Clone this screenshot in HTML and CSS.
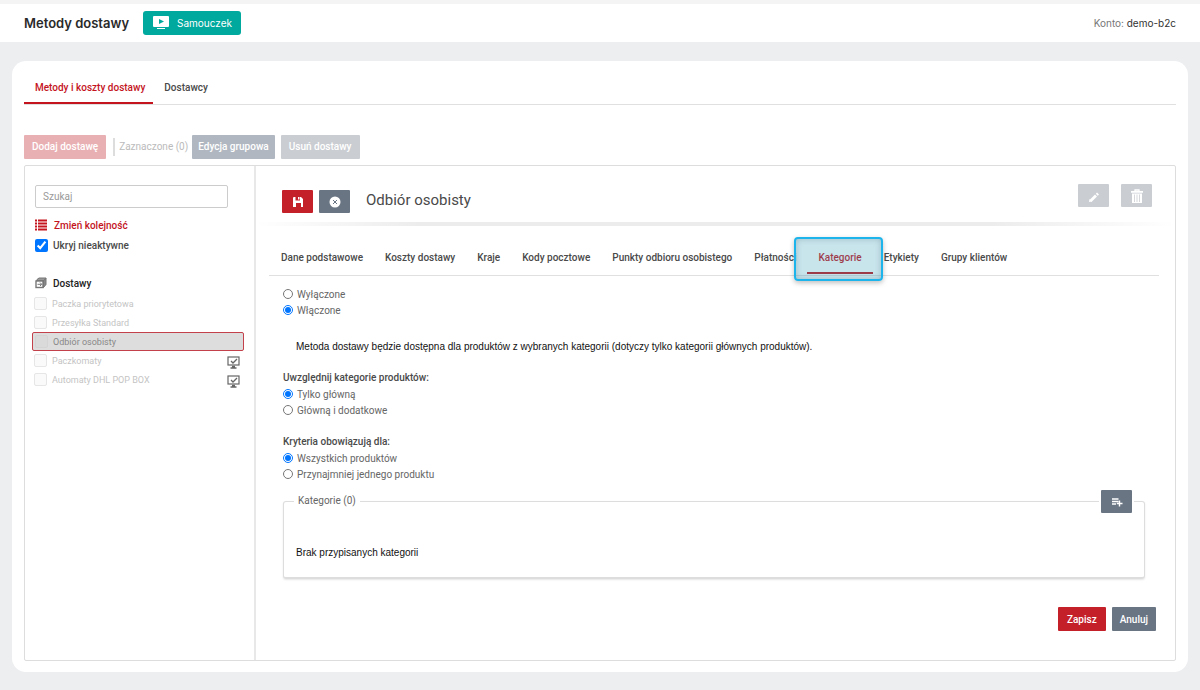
FILE: index.html
```html
<!DOCTYPE html>
<html lang="pl">
<head>
<meta charset="utf-8">
<title>Metody dostawy</title>
<link rel="stylesheet" href="styles.css">
</head>
<body>
<header class="topbar">
  <h1 class="page-title">Metody dostawy</h1>
  <button class="tutorial" type="button">
    <svg width="16" height="14" viewBox="0 0 16 14"><rect width="16" height="11" rx="1" fill="#fff"/><path d="M6 3v5l5-2.500z" fill="#00a99d"/><path d="M4 12.500h8" stroke="#fff"/></svg>
    Samouczek
  </button>
  <div class="account">Konto: <span class="account-name">demo-b2c</span></div>
</header>
<main class="card">
  <nav class="main-tabs">
    <a class="main-tab main-tab-active" href="#">Metody i koszty dostawy</a>
    <a class="main-tab" href="#">Dostawcy</a>
  </nav>
  <div class="toolbar">
    <button class="btn btn-add" type="button">Dodaj dostawę</button>
    <span class="selected-count">Zaznaczone (0)</span>
    <button class="btn btn-group" type="button">Edycja grupowa</button>
    <button class="btn btn-muted" type="button">Usuń dostawy</button>
  </div>
  <div class="frame">
    <aside class="sidebar">
      <input class="search" type="text" placeholder="Szukaj" aria-label="Szukaj">
      <a class="reorder" href="#">
        <svg width="12" height="12" viewBox="0 0 12 12"><path d="M0 1.500h2M3 1.500h9M0 4.500h2M3 4.500h9M0 7.500h2M3 7.500h9M0 10.500h2M3 10.500h9" stroke="#c4141d" stroke-width="2"/></svg>
        Zmień kolejność
      </a>
      <label class="hide-inactive"><input class="check" type="checkbox" checked>Ukryj nieaktywne</label>
      <div class="group-title">
        <svg width="12" height="12" viewBox="0 0 12 12" fill="none" stroke="#777"><path d="M2 2.500L4 1h7L9 3.500H1.500z" fill="#999"/><path d="M11 1v6.500L8.500 10.500V4z" fill="#888"/><rect x="1" y="4" width="7" height="6.500" fill="#fff" stroke-width="1.400"/><path d="M2.500 7.300h4M5 5.500l1.800 1.800L5 9"/></svg>
        Dostawy
      </div>
      <ul class="methods">
        <li class="method"><label class="method-label"><input class="box" type="checkbox">Paczka priorytetowa</label></li>
        <li class="method"><label class="method-label"><input class="box" type="checkbox">Przesyłka Standard</label></li>
        <li class="method method-active"><label class="method-label"><input class="box" type="checkbox">Odbiór osobisty</label></li>
        <li class="method"><label class="method-label"><input class="box" type="checkbox">Paczkomaty</label>
          <svg class="monitor" width="13" height="13" viewBox="0 0 13 13" fill="none" stroke="#666"><rect x="1" y="1" width="11" height="8" stroke-width="1.200"/><path d="M4 5l2 2 4-4" stroke-width="1.300"/><path d="M5 10.500h3M3.500 12h6" stroke-width="1.500"/></svg></li>
        <li class="method"><label class="method-label"><input class="box" type="checkbox">Automaty DHL POP BOX</label>
          <svg class="monitor" width="13" height="13" viewBox="0 0 13 13" fill="none" stroke="#666"><rect x="1" y="1" width="11" height="8" stroke-width="1.200"/><path d="M4 5l2 2 4-4" stroke-width="1.300"/><path d="M5 10.500h3M3.500 12h6" stroke-width="1.500"/></svg></li>
      </ul>
    </aside>
    <section class="detail">
      <div class="detail-head">
        <button class="icon-btn icon-btn-red" type="button" aria-label="Zapisz zmiany"><svg width="10" height="10" viewBox="0 0 10 10"><path fill="#fff" fill-rule="evenodd" d="M1 0h1.500v3.500h4.500V0h1l2 2v8H8V6H3v4H0V1a1 1 0 0 1 1-1zM5 0h1.500v2.500H5z"/></svg></button>
        <button class="icon-btn icon-btn-slate" type="button" aria-label="Zamknij"><svg width="12" height="12" viewBox="0 0 12 12"><circle cx="6" cy="6" r="5.500" fill="#fff"/><path d="M4 4l4 4M8 4l-4 4" stroke="#6a7583"/></svg></button>
        <h2 class="detail-title">Odbiór osobisty</h2>
        <div class="detail-actions">
          <button class="icon-btn icon-btn-light" type="button" aria-label="Edytuj"><svg width="12" height="12" viewBox="0 0 12 12"><path d="M2.500 11L8 5.500M8.800 4.700L10 3.500" stroke="#fff" stroke-width="2.800"/><path d="M1 12l.5-3 2.500 2.500z" fill="#fff"/></svg></button>
          <button class="icon-btn icon-btn-light" type="button" aria-label="Usuń"><svg width="12" height="14" viewBox="0 0 12 14"><path d="M4 2.500V1h4v1.500" fill="none" stroke="#fff" stroke-width="1.300"/><path d="M0 2h12v1.800H0zM1 4.500h10V14H1z" fill="#fff"/><path d="M3.500 5.500V13M6 5.500V13M8.500 5.500V13" stroke="#cacdd2" stroke-width=".8"/></svg></button>
        </div>
      </div>
      <nav class="tabs">
        <a class="tab" href="#">Dane podstawowe</a>
        <a class="tab" href="#">Koszty dostawy</a>
        <a class="tab" href="#">Kraje</a>
        <a class="tab" href="#">Kody pocztowe</a>
        <a class="tab" href="#">Punkty odbioru osobistego</a>
        <a class="tab" href="#">Płatności</a>
        <a class="tab tab-active" href="#">Kategorie<span class="highlight"></span></a>
        <a class="tab" href="#">Etykiety</a>
        <a class="tab" href="#">Grupy klientów</a>
      </nav>
      <form class="form">
        <div class="options" role="radiogroup" aria-label="Kategorie">
          <label class="option"><input class="radio" type="radio" name="state">Wyłączone</label>
          <label class="option"><input class="radio" type="radio" name="state" checked>Włączone</label>
        </div>
        <p class="note">Metoda dostawy będzie dostępna dla produktów z wybranych kategorii (dotyczy tylko kategorii głównych produktów).</p>
        <h3 class="question" id="q-scope">Uwzględnij kategorie produktów:</h3>
        <div class="options" role="radiogroup" aria-labelledby="q-scope">
          <label class="option"><input class="radio" type="radio" name="scope" checked>Tylko główną</label>
          <label class="option"><input class="radio" type="radio" name="scope">Główną i dodatkowe</label>
        </div>
        <h3 class="question" id="q-rule">Kryteria obowiązują dla:</h3>
        <div class="options" role="radiogroup" aria-labelledby="q-rule">
          <label class="option"><input class="radio" type="radio" name="rule" checked>Wszystkich produktów</label>
          <label class="option"><input class="radio" type="radio" name="rule">Przynajmniej jednego produktu</label>
        </div>
        <fieldset class="categories">
          <legend class="legend">Kategorie (0)</legend>
          <span class="add-slot"><button class="icon-btn icon-btn-slate" type="button" aria-label="Dodaj kategorie"><svg width="12" height="10" viewBox="0 0 12 10" fill="none" stroke="#fff" stroke-width="1.400"><path d="M1 2h6.500M1 4.500h6.500M1 7h4M8.500 3.500v6M5.800 6.500h5.700"/></svg></button></span>
          <p class="empty">Brak przypisanych kategorii</p>
        </fieldset>
        <div class="form-actions">
          <button class="btn btn-save" type="button">Zapisz</button>
          <button class="btn btn-cancel" type="button">Anuluj</button>
        </div>
      </form>
    </section>
  </div>
</main>
</body>
</html>
```
FILE: styles.css
```css
* { box-sizing: border-box; }
body {
  margin: 0;
  background: #edeef0;
  font-family: Roboto, "Liberation Sans", sans-serif;
  font-size: 10px;
  color: #4a4a4a;
}
button, input { font: inherit; margin: 0; }
button { border: 0; padding: 0; color: #fff; cursor: pointer; }
a { color: inherit; text-decoration: none; }
svg { display: block; flex: none; }
h1, h2, h3, p, ul { margin: 0; padding: 0; }

.topbar {
  display: flex;
  align-items: center;
  height: 42px;
  padding: 0 24px;
  border-top: 4px solid #f4f4f4;
  background: #fff;
  font-family: Inter, "Liberation Sans", sans-serif;
}
.page-title { margin-right: 14px; font-size: 13px; font-weight: 600; color: #2a2a2a; }
.tutorial {
  display: flex;
  align-items: center;
  gap: 8px;
  height: 24px;
  padding: 0 9px 0 10px;
  border-radius: 3px;
  background: #00a99d;
  font-size: 10px;
}
.account { margin-left: auto; font-size: 10px; color: #777; }
.account-name { color: #333; }

.card {
  margin: 19px 12px 18px;
  padding: 10px 12px 11px;
  border-radius: 14px;
  background: #fff;
}
.main-tabs { display: flex; border-bottom: 1px solid #e0e0e0; }
.main-tab {
  height: 33px;
  padding: 0 8px 0 11px;
  line-height: 33px;
  font-weight: 500;
}
.main-tab-active { border-bottom: 2px solid #c4141d; color: #c4141d; }
.toolbar { display: flex; align-items: center; margin-top: 29px; height: 25px; }
.btn { height: 24px; padding: 0 8px; border-radius: 1px; font-weight: 500; }
.btn-add { background: #e9b0b3; }
.btn-group { padding: 0 6px; background: #b1b7c0; }
.btn-muted { margin-left: 6px; background: #cacdd2; }
.selected-count {
  margin: 0 4px 0 7px;
  padding-left: 4px;
  border-left: 2px solid #ddd;
  line-height: 18px;
  color: #bbb;
}

.frame {
  display: flex;
  min-height: 496px;
  margin-top: 6px;
  border: 1px solid #ddd;
  border-radius: 2px;
}
.sidebar { flex: none; width: 231px; padding: 19px 10px 0 7px; border-right: 2px solid #e8e8e8; }
.search {
  display: block;
  width: 193px;
  height: 23px;
  margin-left: 3px;
  padding: 0 7px;
  border: 1px solid #ccc;
  border-radius: 2px;
}
.search::placeholder { color: #999; }
.reorder, .hide-inactive, .group-title { display: flex; align-items: center; margin-left: 3px; font-weight: 500; }
.reorder { gap: 7px; height: 20px; margin-top: 7px; color: #c4141d; }
.hide-inactive { gap: 5px; height: 20px; }
.check { width: 13px; height: 13px; }
.group-title { gap: 6px; height: 20px; margin-top: 18px; color: #222; }
.methods { margin-top: 1px; list-style: none; }
.method {
  display: flex;
  align-items: center;
  justify-content: space-between;
  height: 19px;
  padding: 0 3px 0 1px;
  border: 1px solid transparent;
  color: #c4c4c4;
  font-size: 9px;
}
.method-active { padding-left: 2px; border-color: #c2414a; border-radius: 2px; background: #ddd; color: #888; }
.method-label { display: flex; align-items: center; gap: 5px; }
.monitor { margin-top: 4px; }
.box {
  appearance: none;
  width: 13px;
  height: 13px;
  border: 1px solid #e6e6e6;
  border-radius: 2px;
  background: #fafafa;
}
.method-active .box { border-color: #d4d4d4; background: #dadada; }

.detail { flex: 1; min-width: 0; }
.detail-head {
  display: flex;
  align-items: center;
  gap: 6px;
  height: 60px;
  padding: 15px 23px 0 26px;
  border-bottom: 4px solid;
  border-image: linear-gradient(to right, #fff, #ececec 18%, #ececec 80%, #fff) 1;
}
.icon-btn {
  display: flex;
  align-items: center;
  justify-content: center;
  width: 31px;
  height: 23px;
  border-radius: 1px;
}
.icon-btn-red { background: #c4202a; }
.icon-btn-slate { background: #6a7583; }
.icon-btn-light { background: #cacdd2; }
.detail-title { margin-left: 10px; padding-bottom: 4px; font-size: 15px; font-weight: 400; }
.detail-actions { display: flex; gap: 12px; margin-left: auto; padding-bottom: 12px; }
.tabs {
  display: flex;
  margin: 15px 16px 0 13px;
  padding-left: 1px;
  border-bottom: 1px solid #e0e0e0;
}
.tab { height: 34px; padding: 0 11px; line-height: 34px; font-weight: 500; white-space: nowrap; }
.tab-active {
  position: relative;
  height: 33px;
  border-bottom: 2px solid #c4141d;
  color: #c4141d;
}
.highlight {
  position: absolute;
  inset: -4px -10px -9px -13px;
  border: 2px solid #1cb4ea;
  border-radius: 4px;
  background: rgba(60, 160, 185, 0.280);
  box-shadow: inset 0 0 6px rgba(90, 120, 140, 0.400), 0 2px 5px rgba(0, 0, 0, 0.250);
}

.form { padding: 10px 19px 0 27px; color: #666; }
.option { display: flex; align-items: center; gap: 4px; height: 16px; }
.radio { width: 10px; height: 10px; }
.note, .empty { font: 10px/14px "Liberation Sans", Arial, sans-serif; color: #111; }
.note { margin: 22px 0 0 13px; }
.question { margin-top: 16px; font-size: 10px; line-height: 16px; font-weight: 500; color: #4a4a4a; }
.categories {
  position: relative;
  min-width: 0;
  height: 85px;
  margin: 12px 11px 0 0;
  padding: 0 12px;
  border: 1px solid #ddd;
  border-bottom-width: 2px;
  border-radius: 3px;
  box-shadow: 0 1px 2px rgba(0, 0, 0, 0.100);
}
.legend { margin-left: -2px; padding: 0 4px; line-height: 14px; }
.add-slot { position: absolute; top: -18px; right: 10px; padding: 0 2px; background: #fff; }
.empty { margin-top: 38px; }
.form-actions { display: flex; justify-content: flex-end; gap: 6px; margin-top: 28px; }
.btn-save { padding: 0 9px; background: #c4202a; }
.btn-cancel { background: #6a7583; }
```
